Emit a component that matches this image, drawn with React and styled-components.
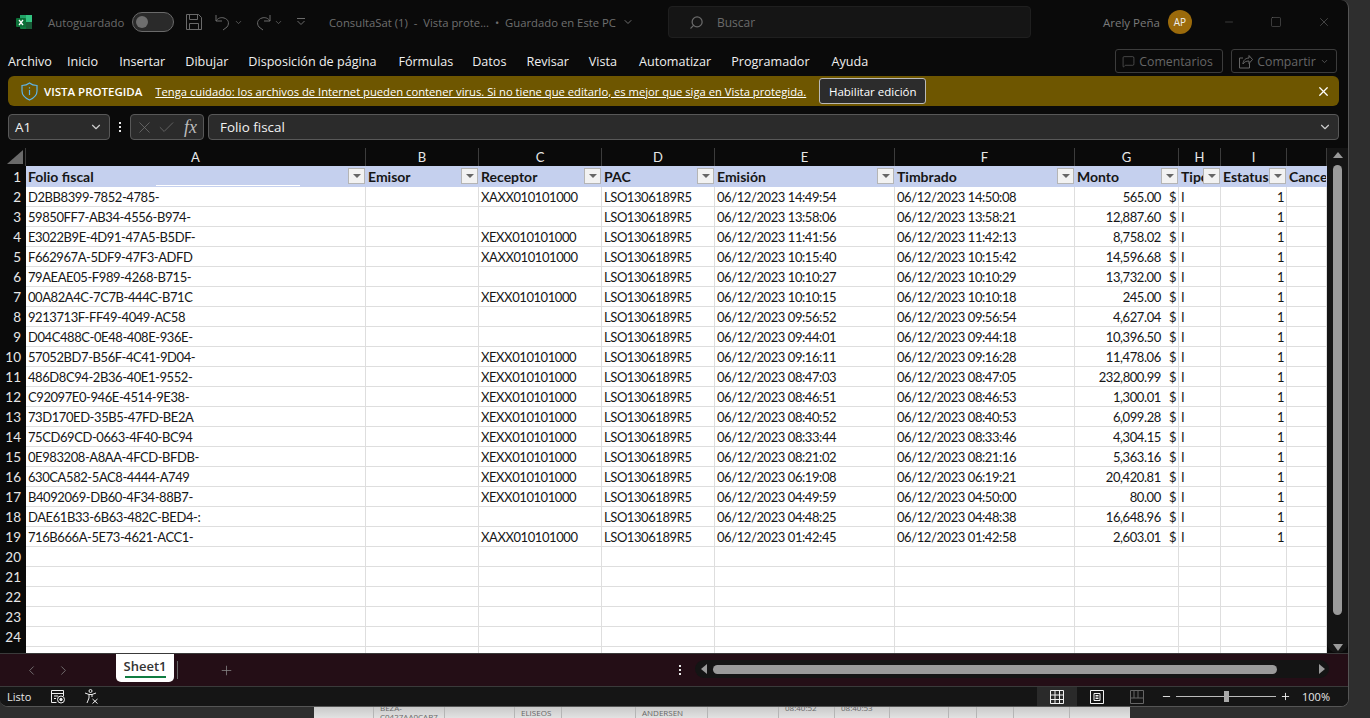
import React from "react";
import styled, { createGlobalStyle } from "styled-components";
import { ChevronDown, ChevronLeft, ChevronRight, Minus, Plus, Square, X, Check, Search, MessageSquare } from "lucide-react";

const UI = `"Open Sans", "Noto Sans", sans-serif`;
const SHEET = `Lato, "Liberation Sans", sans-serif`;

const Global = createGlobalStyle`
  html, body { margin: 0; padding: 0; height: 718px; overflow: hidden; background: #2e2e2e; }
  * { box-sizing: border-box; }
`;

const Page = styled.div`
  width: 1370px;
  height: 718px;
  background: #2e2e2e;
  font-family: ${UI};
  overflow: hidden;
`;

const Window = styled.div`
  width: 1349px;
  height: 707px;
  background: #0a0a0a;
  border-right: 1px solid #555;
  border-bottom: 1px solid #555;
  border-radius: 0 8px 8px 8px;
  overflow: hidden;
  display: flex;
  flex-direction: column;
`;

const TitleBar = styled.div`
  height: 44px;
  flex: none;
  display: flex;
  align-items: center;
  padding-left: 16px;
  color: #6f6f6f;
  font-size: 12px;
`;

const Autosave = styled.span`
  margin-left: 15px;
  width: 77px;
  font-size: 11.4px;
  color: #6b6b6b;
`;

const Toggle = styled.div`
  width: 42px;
  height: 20px;
  border: 1px solid #6a6a6a;
  border-radius: 10px;
  background: #2a2a2a;
  padding: 3px;
  margin-left: 7px;
  margin-right: 12px;
  display: flex;
`;

const Knob = styled.div`
  width: 12px;
  height: 12px;
  border-radius: 50%;
  background: #6e6e6e;
`;

const ToolIcon = styled.span`
  display: inline-flex;
  align-items: center;
  color: #6a6a6a;
  margin-right: ${(p) => p.$gap || 0}px;
`;

const DocTitle = styled.span`
  margin-left: 24px;
  width: 339px;
  color: #6f6f6f;
  font-size: 11.3px;
  white-space: pre;
  display: flex;
  align-items: center;
  gap: 3px;
`;

const SearchBox = styled.div`
  width: 363px;
  height: 32px;
  background: #151515;
  border: 1px solid #1f1f1f;
  border-radius: 4px;
  display: flex;
  align-items: center;
  gap: 13px;
  padding-left: 20px;
  color: #6a6a6a;
  font-size: 12px;
`;

const UserBlock = styled.div`
  margin-left: 72px;
  display: flex;
  align-items: center;
  gap: 8px;
  color: #7a7a7a;
  font-size: 11.5px;
`;

const Avatar = styled.div`
  width: 24px;
  height: 24px;
  border-radius: 50%;
  background: #9b6a0b;
  color: #eee;
  font-size: 10px;
  display: flex;
  align-items: center;
  justify-content: center;
`;

const WindowButtons = styled.div`
  margin-left: 31px;
  display: flex;
  align-items: center;
  gap: 35px;
  color: #6d6d6d;
`;

const MenuBar = styled.div`
  height: 32px;
  flex: none;
  display: flex;
  align-items: center;
  padding: 2px 10px 0 8px;
`;

const MenuItem = styled.span`
  color: #f0f0f0;
  font-size: 12.6px;
  margin-right: ${(p) => p.$gap}px;
  white-space: nowrap;
`;

const OutlineButton = styled.div`
  height: 24px;
  border: 1px solid #3c3c3c;
  border-radius: 3px;
  display: flex;
  align-items: center;
  gap: 4px;
  padding: 0 6px;
  color: #666;
  font-size: 12.3px;
  margin-left: ${(p) => p.$left || 0}px;
  width: ${(p) => p.$width}px;
  flex: none;
`;

const ProtectedBar = styled.div`
  margin: 0 9px 0 8px;
  height: 30px;
  flex: none;
  background: #6e5600;
  border-radius: 6px;
  display: flex;
  align-items: center;
  padding: 0 8px 0 13px;
  color: #fff;
`;

const BarTitle = styled.span`
  font-size: 11.5px;
  font-weight: 600;
  margin-left: 6px;
  white-space: nowrap;
`;

const BarLink = styled.span`
  font-size: 11.22px;
  text-decoration: underline;
  margin-left: 13px;
  white-space: nowrap;
`;

const EnableButton = styled.div`
  margin-left: 13px;
  width: 107px;
  height: 26px;
  background: #2c2c2c;
  border: 1px solid #b9b9b9;
  border-radius: 3px;
  font-size: 11.5px;
  display: flex;
  align-items: center;
  justify-content: center;
`;

const BarClose = styled.span`
  margin-left: auto;
  display: inline-flex;
`;

const FormulaRow = styled.div`
  margin: 8px 9px 8px 8px;
  height: 26px;
  flex: none;
  display: flex;
  align-items: center;
`;

const FieldBox = styled.div`
  height: 26px;
  width: ${(p) => p.$width || "auto"};
  flex: ${(p) => (p.$grow ? 1 : "none")};
  margin-left: ${(p) => (p.$grow ? 4 : 0)}px;
  background: #2b2b2b;
  border: 1px solid #585858;
  border-radius: 4px;
  display: flex;
  align-items: center;
  color: #f2f2f2;
  font-size: 13.4px;
  padding: 0 ${(p) => (p.$tight ? 4 : 6)}px 0 ${(p) => (p.$grow ? 11 : p.$tight ? 4 : 6)}px;
  justify-content: ${(p) => (p.$spread ? "space-between" : "flex-start")};
`;

const Dots = styled.div`
  width: 20px;
  display: flex;
  flex-direction: column;
  align-items: center;
  gap: 2px;
`;

const Dot = styled.i`
  width: 2px;
  height: 2px;
  background: #e8e8e8;
`;

const Fx = styled.span`
  font-family: "Liberation Serif", serif;
  font-style: italic;
  font-size: 18px;
  color: #bdbdbd;
  margin-left: 8px;
`;

const SheetArea = styled.div`
  height: 505px;
  flex: none;
  display: flex;
`;

const Grid = styled.div`
  width: 1327px;
  flex: none;
  overflow: hidden;
  font-family: ${SHEET};
`;

const HeaderRow = styled.div`
  height: 18px;
  display: flex;
`;

const Corner = styled.div`
  width: 26px;
  border-right: 1px solid #3c3c3c;
  display: flex;
  align-items: flex-end;
  justify-content: flex-end;
  padding: 0 2px 2px 0;
`;

const ColLabel = styled.div`
  width: ${(p) => p.$w}px;
  flex: none;
  border-right: 1px solid #3c3c3c;
  color: #e8e8e8;
  font-size: 13px;
  display: flex;
  align-items: center;
  justify-content: center;
`;

const Row = styled.div`
  height: ${(p) => (p.$head ? 21 : 20)}px;
  display: flex;
`;

const RowNum = styled.div`
  width: 26px;
  flex: none;
  background: #0a0a0a;
  color: #e8e8e8;
  font-size: 13.5px;
  display: flex;
  align-items: center;
  justify-content: flex-end;
  padding-right: 5px;
`;

const Cell = styled.div`
  width: ${(p) => p.$w}px;
  flex: none;
  position: relative;
  background: ${(p) => (p.$head ? "#c5d0ee" : "#fff")};
  border-right: 1px solid ${(p) => (p.$head ? "#c5d0ee" : "#dedede")};
  border-bottom: 1px solid ${(p) => (p.$head ? "#c5d0ee" : "#dedede")};
  color: #161616;
  font-size: ${(p) => (p.$head ? 14 : 13)}px;
  letter-spacing: ${(p) => (p.$head ? 0 : -0.42)}px;
  font-weight: ${(p) => (p.$head ? 700 : 400)};
  display: flex;
  align-items: center;
  justify-content: ${(p) => (p.$right ? "flex-end" : "flex-start")};
  padding: 1px 2px 0 2px;
  white-space: nowrap;
  overflow: hidden;
`;

const Filter = styled.span`
  position: absolute;
  right: 0;
  top: 2px;
  width: 17px;
  height: 16px;
  background: #f2f2f2;
  border: 1px solid #b5b5b5;
  display: flex;
  align-items: center;
  justify-content: center;
  &::after {
    content: "";
    border-left: 4px solid transparent;
    border-right: 4px solid transparent;
    border-top: 4px solid #666;
  }
`;

const HeadMask = styled.span`
  position: absolute;
  left: 130px;
  bottom: 0;
  width: 144px;
  height: 1px;
  background: #fff;
`;

const Currency = styled.span`
  margin-left: 8px;
`;

const VScroll = styled.div`
  width: 21px;
  flex: none;
  background: #141414;
  border-radius: 0 0 10px 10px;
  display: flex;
  flex-direction: column;
  align-items: center;
  padding: 4px 0 2px;
`;

const ArrowUp = styled.i`
  border-left: 5px solid transparent;
  border-right: 5px solid transparent;
  border-bottom: 6px solid #9a9a9a;
`;

const ArrowDown = styled.i`
  border-left: 5px solid transparent;
  border-right: 5px solid transparent;
  border-top: 7px solid #9a9a9a;
  margin-top: auto;
`;

const VThumb = styled.div`
  width: 9px;
  height: 450px;
  background: #9a9a9a;
  border-radius: 5px;
  margin-top: 7px;
`;

const TabBar = styled.div`
  height: 33px;
  flex: none;
  background: #240e16;
  border-top: 1px solid #3a3a3a;
  display: flex;
  align-items: flex-start;
  color: #8a8a8a;
`;

const TabNav = styled.div`
  width: 116px;
  height: 32px;
  display: flex;
  align-items: center;
  gap: 17px;
  padding-left: 24px;
`;

const Tab = styled.div`
  width: 58px;
  height: 28px;
  background: #fff;
  border-radius: 0 0 5px 5px;
  color: #333;
  font-size: 13px;
  font-weight: 600;
  display: flex;
  flex-direction: column;
  align-items: center;
  padding-top: 3px;
  &::after {
    content: "";
    width: 41px;
    height: 2px;
    background: #107c41;
    margin-top: 1px;
  }
`;

const TabSep = styled.div`
  width: 1px;
  height: 18px;
  background: #666;
  margin: 7px 0 0 3px;
`;

const AddTab = styled.span`
  margin-left: 41px;
  height: 32px;
  display: inline-flex;
  align-items: center;
`;

const HDots = styled(Dots)`
  margin-left: 435px;
  width: 22px;
  height: 32px;
  justify-content: center;
`;

const HScroll = styled.div`
  margin-left: 4px;
  width: 634px;
  height: 18px;
  margin-top: 6px;
  background: #141414;
  border-radius: 9px;
  display: flex;
  align-items: center;
  padding: 0 4px 0 6px;
`;

const ArrowLeft = styled.i`
  border-top: 5px solid transparent;
  border-bottom: 5px solid transparent;
  border-right: 6px solid #9a9a9a;
`;

const ArrowRight = styled.i`
  border-top: 5px solid transparent;
  border-bottom: 5px solid transparent;
  border-left: 6px solid #9a9a9a;
  margin-left: auto;
`;

const HThumb = styled.div`
  width: 564px;
  height: 9px;
  background: #9a9a9a;
  border-radius: 5px;
  margin-left: 6px;
`;

const StatusBar = styled.div`
  flex: 1;
  min-height: 0;
  background: #151515;
  border-top: 1px solid #3a3a3a;
  display: flex;
  align-items: center;
  padding-left: 7px;
  color: #e8e8e8;
  font-size: 11px;
`;

const StatusIcon = styled.span`
  display: inline-flex;
  margin-left: ${(p) => p.$left}px;
`;

const ViewGroup = styled.div`
  margin-left: auto;
  display: flex;
  align-items: center;
  height: 100%;
`;

const ViewButton = styled.span`
  width: 40px;
  height: 100%;
  background: ${(p) => (p.$on ? "#2a2a2a" : "transparent")};
  display: flex;
  align-items: center;
  justify-content: center;
`;

const Zoom = styled.div`
  display: flex;
  align-items: center;
  margin-left: 4px;
  gap: 4px;
`;

const Track = styled.div`
  width: 100px;
  height: 1px;
  background: #bbb;
  display: flex;
  align-items: center;
  justify-content: center;
`;

const Thumb = styled.i`
  width: 5px;
  height: 11px;
  background: #aaa;
  flex: none;
`;

const Percent = styled.span`
  margin: 0 18px 0 11px;
  font-size: 11px;
`;

const BehindWindow = styled.div`
  margin-left: 314px;
  width: 816px;
  height: 11px;
  background: linear-gradient(#c9c9c9, #e2e2e2);
  display: flex;
  overflow: hidden;
  color: #666;
  font-size: 8px;
  font-family: ${UI};
`;

const BehindCell = styled.div`
  width: ${(p) => p.$w}px;
  flex: none;
  border-right: 1px solid #b5b5b5;
  padding-left: 6px;
  overflow: hidden;
  white-space: nowrap;
`;

const BehindText = styled.div`
  line-height: 9px;
  &:first-child {
    margin-top: ${(p) => (p.$up ? -4 : 1)}px;
  }
`;

const ExcelLogo = () => (
  <svg width="17" height="16" viewBox="0 0 17 16">
    <rect x="4" y="1" width="12" height="14" rx="1" fill="#107c41" />
    <rect x="10" y="1" width="6" height="7" fill="#33c481" />
    <rect x="4" y="1" width="6" height="4" fill="#21a366" />
    <rect x="10" y="8" width="6" height="7" fill="#185c37" />
    <rect x="0" y="4" width="10" height="9" rx="1" fill="#0c7038" />
    <path d="M3 6l4 5M7 6l-4 5" stroke="#fff" strokeWidth="1.3" />
  </svg>
);

const SaveIcon = () => (
  <svg width="16" height="16" viewBox="0 0 16 16" fill="none" stroke="#6a6a6a">
    <path d="M.5.5h12l3 3v12H.5z" />
    <path d="M3.5.5v5h8v-5M3.5 15.5v-6h9v6" />
  </svg>
);

const UndoIcon = ({ flip }) => (
  <svg width="16" height="17" viewBox="0 0 16 17" fill="none" stroke="#6a6a6a" style={flip ? { transform: "scaleX(-1)" } : undefined}>
    <path d="M1 1v6h6" />
    <path d="M1 7c2-3 5-4 8-3 4 1 6 5 3 9l-4 3" />
  </svg>
);

const MoreIcon = () => (
  <svg width="8" height="8" viewBox="0 0 8 8" fill="none" stroke="#6a6a6a">
    <path d="M0 .5h8M.5 3l3.500 3.500L7.500 3" />
  </svg>
);

const ShareIcon = () => (
  <svg width="15" height="15" viewBox="0 0 15 15" fill="none" stroke="#666">
    <path d="M5 4H1.500v10h10V9" />
    <path d="M5 10c0-4 3-6 6-6V1.500l3.500 4-3.500 4V7c-3 0-5 1-6 3z" />
  </svg>
);

const ShieldIcon = () => (
  <svg width="17" height="19" viewBox="0 0 17 19" fill="none" stroke="#5fb4e6" strokeWidth="1.2">
    <path d="M8.500 1c2 1.700 4.500 2.500 7.500 2.500V9c0 4-3 7-7.500 9C4 16 1 13 1 9V3.500C4 3.500 6.500 2.700 8.500 1z" />
    <path d="M8.500 8v5M8.500 5.200v1.400" />
  </svg>
);

const MacroIcon = () => (
  <svg width="15" height="14" viewBox="0 0 15 14" fill="none" stroke="#eee">
    <path d="M12.500 6V.5H.5v12h5M.5 3.500h12M3 6h4M3 8.500h2" />
    <circle cx="10" cy="9.500" r="3.500" />
    <circle cx="10" cy="9.500" r="1.200" fill="#eee" />
  </svg>
);

const AccessIcon = () => (
  <svg width="15" height="15" viewBox="0 0 15 15" fill="none" stroke="#eee">
    <circle cx="6.500" cy="2" r="1.500" />
    <path d="M1 4l4 1.500h3L12 4M5 5.500V9l-2 5M8 5.500V8" />
    <path d="M8.500 10l5 4.500M13.500 10l-5 4.500" />
  </svg>
);

const NormalViewIcon = () => (
  <svg width="14" height="14" viewBox="0 0 14 14" fill="none" stroke="#f2f2f2">
    <path d="M.5.500h13v13H.500zM.5 5h13M.5 9.500h13M5 .5v13M9.500 .5v13" />
  </svg>
);

const PageViewIcon = () => (
  <svg width="14" height="14" viewBox="0 0 14 14" fill="none" stroke="#f2f2f2">
    <path d="M.5.500h13v13H.500zM4 3.500h6v7H4zM5.500 5.500h3M5.500 7h3M5.500 8.500h3" />
  </svg>
);

const BreakViewIcon = () => (
  <svg width="14" height="14" viewBox="0 0 14 14" fill="none" stroke="#666">
    <path d="M.5.500h13v13H.500zM.5 8h13M4 .5V8M8 .5V8" />
  </svg>
);

const menus = [
  ["Archivo", 15],
  ["Inicio", 21],
  ["Insertar", 20],
  ["Dibujar", 20],
  ["Disposición de página", 22],
  ["Fórmulas", 19],
  ["Datos", 20],
  ["Revisar", 20],
  ["Vista", 22],
  ["Automatizar", 20],
  ["Programador", 22],
  ["Ayuda", 0],
];

const widths = [340, 113, 123, 113, 180, 180, 104, 42, 66, 40];
const letters = ["A", "B", "C", "D", "E", "F", "G", "H", "I", ""];
const heads = ["Folio fiscal", "Emisor", "Receptor", "PAC", "Emisión", "Timbrado", "Monto", "Tipo", "Estatus", "Cancelado"];

const data = [
  ["D2BB8399-7852-4785-", "XAXX010101000", "14:49:54", "14:50:08", "565.00"],
  ["59850FF7-AB34-4556-B974-", "", "13:58:06", "13:58:21", "12,887.60"],
  ["E3022B9E-4D91-47A5-B5DF-", "XEXX010101000", "11:41:56", "11:42:13", "8,758.02"],
  ["F662967A-5DF9-47F3-ADFD", "XAXX010101000", "10:15:40", "10:15:42", "14,596.68"],
  ["79AEAE05-F989-4268-B715-", "", "10:10:27", "10:10:29", "13,732.00"],
  ["00A82A4C-7C7B-444C-B71C", "XEXX010101000", "10:10:15", "10:10:18", "245.00"],
  ["9213713F-FF49-4049-AC58", "", "09:56:52", "09:56:54", "4,627.04"],
  ["D04C488C-0E48-408E-936E-", "", "09:44:01", "09:44:18", "10,396.50"],
  ["57052BD7-B56F-4C41-9D04-", "XEXX010101000", "09:16:11", "09:16:28", "11,478.06"],
  ["486D8C94-2B36-40E1-9552-", "XEXX010101000", "08:47:03", "08:47:05", "232,800.99"],
  ["C92097E0-946E-4514-9E38-", "XEXX010101000", "08:46:51", "08:46:53", "1,300.01"],
  ["73D170ED-35B5-47FD-BE2A", "XEXX010101000", "08:40:52", "08:40:53", "6,099.28"],
  ["75CD69CD-0663-4F40-BC94", "XEXX010101000", "08:33:44", "08:33:46", "4,304.15"],
  ["0E983208-A8AA-4FCD-BFDB-", "XEXX010101000", "08:21:02", "08:21:16", "5,363.16"],
  ["630CA582-5AC8-4444-A749", "XEXX010101000", "06:19:08", "06:19:21", "20,420.81"],
  ["B4092069-DB60-4F34-88B7-", "XEXX010101000", "04:49:59", "04:50:00", "80.00"],
  ["DAE61B33-6B63-482C-BED4-:", "", "04:48:25", "04:48:38", "16,648.96"],
  ["716B666A-5E73-4621-ACC1-", "XAXX010101000", "01:42:45", "01:42:58", "2,603.01"],
];

const DATE = "06/12/2023 ";
const emptyRows = [20, 21, 22, 23, 24, 25];

const behind = [
  [60],
  [71, ["BEZA-", "C0427AA0CAB7"], true],
  [70],
  [47, ["ELISEOS"]],
  [74],
  [72, ["ANDERSEN"]],
  [71],
  [56, ["08:40:52"], true],
  [55, ["08:40:53"], true],
  [59],
  [28],
  [37],
  [56],
  [61],
];

const App = () => {
  return (
    <Page>
      <Global />
      <Window>
        <TitleBar>
          <ExcelLogo />
          <Autosave>Autoguardado</Autosave>
          <Toggle><Knob /></Toggle>
          <ToolIcon $gap={13}><SaveIcon /></ToolIcon>
          <ToolIcon $gap={3}><UndoIcon /></ToolIcon>
          <ToolIcon $gap={12}><ChevronDown size={9} /></ToolIcon>
          <ToolIcon $gap={3}><UndoIcon flip /></ToolIcon>
          <ToolIcon $gap={14}><ChevronDown size={9} /></ToolIcon>
          <MoreIcon />
          <DocTitle>ConsultaSat (1)  -  Vista prote...  •  Guardado en Este PC <ChevronDown size={12} /></DocTitle>
          <SearchBox><Search size={15} style={{ transform: "scaleX(-1)" }} />Buscar</SearchBox>
          <UserBlock>Arely Peña<Avatar>AP</Avatar></UserBlock>
          <WindowButtons>
            <Minus size={12} strokeWidth={1} />
            <Square size={12} strokeWidth={1} />
            <X size={14} strokeWidth={1} />
          </WindowButtons>
        </TitleBar>

        <MenuBar>
          {menus.map(([label, gap]) => (
            <MenuItem key={label} $gap={gap}>{label}</MenuItem>
          ))}
          <OutlineButton $left={247} $width={108}>
            <MessageSquare size={13} strokeWidth={1.2} />Comentarios
          </OutlineButton>
          <OutlineButton $left={8} $width={106}>
            <ShareIcon />Compartir<ChevronDown size={9} />
          </OutlineButton>
        </MenuBar>

        <ProtectedBar>
          <ShieldIcon />
          <BarTitle>VISTA PROTEGIDA</BarTitle>
          <BarLink>Tenga cuidado: los archivos de Internet pueden contener virus. Si no tiene que editarlo, es mejor que siga en Vista protegida.</BarLink>
          <EnableButton>Habilitar edición</EnableButton>
          <BarClose><X size={15} /></BarClose>
        </ProtectedBar>

        <FormulaRow>
          <FieldBox $width="102px" $spread>A1<ChevronDown size={14} color="#ccc" /></FieldBox>
          <Dots><Dot /><Dot /><Dot /></Dots>
          <FieldBox $width="74px" $tight>
            <X size={19} strokeWidth={0.9} color="#777" />
            <Check size={19} strokeWidth={0.9} color="#777" style={{ marginLeft: 3 }} />
            <Fx>fx</Fx>
          </FieldBox>
          <FieldBox $grow $spread>
            Folio fiscal<ChevronDown size={14} color="#ccc" />
          </FieldBox>
        </FormulaRow>

        <SheetArea>
          <Grid>
            <HeaderRow>
              <Corner>
                <svg width="16" height="14" viewBox="0 0 16 14"><path d="M16 0v14H0z" fill="#6a6a6a" /></svg>
              </Corner>
              {letters.map((l, i) => <ColLabel key={i} $w={widths[i]}>{l}</ColLabel>)}
            </HeaderRow>
            <Row $head>
              <RowNum>1</RowNum>
              {heads.map((h, i) => (
                <Cell key={h} $head $w={widths[i]}>
                  {h}
                  {i === 0 && <HeadMask />}
                  {i < 9 && <Filter />}
                </Cell>
              ))}
            </Row>
            {data.map((r, i) => (
              <Row key={r[0]}>
                <RowNum>{i + 2}</RowNum>
                <Cell $w={widths[0]}>{r[0]}</Cell>
                <Cell $w={widths[1]} />
                <Cell $w={widths[2]}>{r[1]}</Cell>
                <Cell $w={widths[3]}>LSO1306189R5</Cell>
                <Cell $w={widths[4]}>{DATE + r[2]}</Cell>
                <Cell $w={widths[5]}>{DATE + r[3]}</Cell>
                <Cell $w={widths[6]} $right>{r[4]}<Currency>$</Currency></Cell>
                <Cell $w={widths[7]}>I</Cell>
                <Cell $w={widths[8]} $right>1</Cell>
                <Cell $w={widths[9]} />
              </Row>
            ))}
            {emptyRows.map((n) => (
              <Row key={n}>
                <RowNum>{n < 25 ? n : ""}</RowNum>
                {widths.map((w, i) => <Cell key={i} $w={w} />)}
              </Row>
            ))}
          </Grid>
          <VScroll>
            <ArrowUp />
            <VThumb />
            <ArrowDown />
          </VScroll>
        </SheetArea>

        <TabBar>
          <TabNav>
            <ChevronLeft size={15} strokeWidth={1.2} />
            <ChevronRight size={15} strokeWidth={1.2} />
          </TabNav>
          <Tab>Sheet1</Tab>
          <TabSep />
          <AddTab><Plus size={15} strokeWidth={1.2} /></AddTab>
          <HDots><Dot /><Dot /><Dot /></HDots>
          <HScroll>
            <ArrowLeft />
            <HThumb />
            <ArrowRight />
          </HScroll>
        </TabBar>

        <StatusBar>
          Listo
          <StatusIcon $left={20}><MacroIcon /></StatusIcon>
          <StatusIcon $left={18}><AccessIcon /></StatusIcon>
          <ViewGroup>
            <ViewButton $on><NormalViewIcon /></ViewButton>
            <ViewButton><PageViewIcon /></ViewButton>
            <ViewButton><BreakViewIcon /></ViewButton>
            <Zoom>
              <Minus size={11} color="#eee" />
              <Track><Thumb /></Track>
              <Plus size={11} color="#eee" />
            </Zoom>
            <Percent>100%</Percent>
          </ViewGroup>
        </StatusBar>
      </Window>
      <BehindWindow>
        {behind.map(([w, lines, up], i) => (
          <BehindCell key={i} $w={w}>
            {lines && lines.map((t) => <BehindText key={t} $up={up}>{t}</BehindText>)}
          </BehindCell>
        ))}
      </BehindWindow>
    </Page>
  );
};

export default App;
